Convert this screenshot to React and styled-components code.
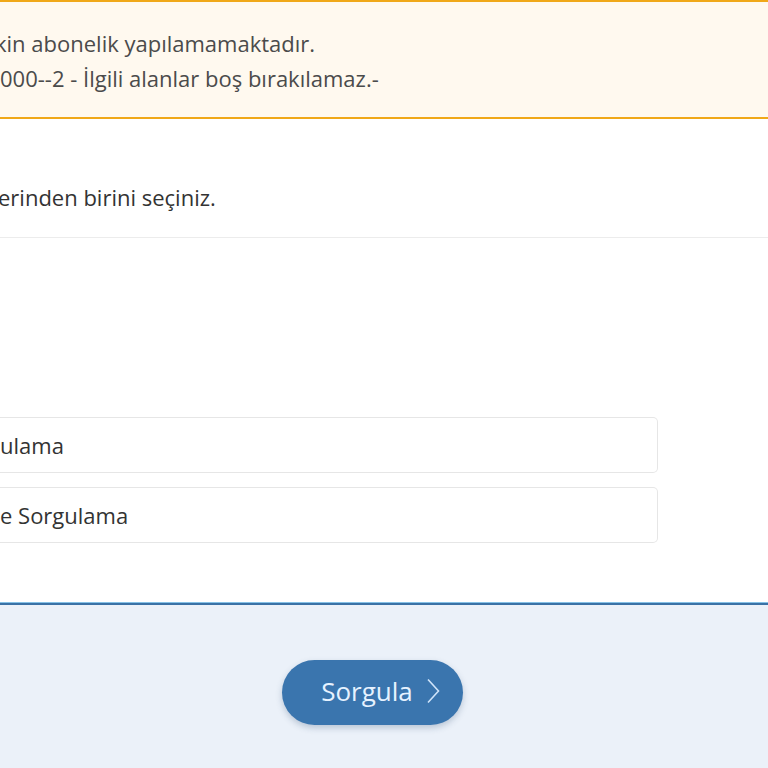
import React from 'react';
import styled, { createGlobalStyle } from 'styled-components';

const GlobalStyle = createGlobalStyle`
  html, body {
    margin: 0;
    padding: 0;
    background: #ffffff;
    font-family: "Open Sans", "Noto Sans", Arial, sans-serif;
    overflow: hidden;
  }
`;

const Page = styled.div`
  width: 768px;
  height: 768px;
  display: flex;
  flex-direction: column;
  overflow: hidden;
`;

const Alert = styled.div`
  background-color: #fff9ef;
  border-top: 2px solid #f0a818;
  border-bottom: 2px solid #f0a818;
  padding: 24px 0 21px;
`;

const AlertLine = styled.p`
  margin: 0 0 0 ${p => p.$shift}px;
  font-size: 22px;
  line-height: 35px;
  color: #4b4b4b;
  white-space: nowrap;
`;

const Body = styled.div`
  display: flex;
  flex-direction: column;
`;

const Intro = styled.p`
  margin: 0 0 0 -2px;
  padding: 66px 0 28px;
  font-size: 22px;
  line-height: 24px;
  color: #333333;
  border-bottom: 1px solid #ececec;
  white-space: nowrap;
`;

const Options = styled.div`
  display: flex;
  flex-direction: column;
  gap: 14px;
  padding: 179px 110px 59px 0;
`;

const Option = styled.div`
  height: 54px;
  display: flex;
  align-items: center;
  border: 1px solid #e6e6e6;
  border-left: none;
  border-radius: 0 5px 5px 0;
  font-size: 22px;
  color: #333333;
  white-space: nowrap;
  padding-left: ${p => p.$shift}px;
`;

const Footer = styled.div`
  flex: 1;
  background-color: #ebf1f9;
  border-top: 1px solid #86c1e6;
  box-shadow: inset 0 2px 0 #3a72a6;
  padding: 57px 0 0 282px;
`;

const Button = styled.button`
  width: 181px;
  height: 65px;
  border: none;
  border-radius: 33px;
  background-color: #3a75ae;
  color: #e6f2ff;
  font-family: "Open Sans", "Noto Sans", Arial, sans-serif;
  font-size: 26px;
  display: flex;
  align-items: center;
  justify-content: center;
  gap: 13px;
  padding: 0 0 4px 16px;
  box-shadow: 0 3px 6px rgba(40, 70, 110, 0.25);
  cursor: pointer;
`;

const Chevron = () => (
  <svg width="14" height="26" viewBox="0 0 14 26" fill="none">
    <path d="M2 1.5 L12.5 13 L2 24.5" stroke="#cfe4fa" strokeWidth="1.6" />
  </svg>
);

export default function App() {
  return (
    <>
      <GlobalStyle />
      <Page>
        <Alert>
          <AlertLine $shift={-5}>kin abonelik yapılamamaktadır.</AlertLine>
          <AlertLine $shift={0}>000--2 - İlgili alanlar boş bırakılamaz.-</AlertLine>
        </Alert>
        <Body>
          <Intro>erinden birini seçiniz.</Intro>
          <Options>
            <Option $shift={0}>ulama</Option>
            <Option $shift={0}>e Sorgulama</Option>
          </Options>
        </Body>
        <Footer>
          <Button>
            Sorgula
            <Chevron />
          </Button>
        </Footer>
      </Page>
    </>
  );
}
